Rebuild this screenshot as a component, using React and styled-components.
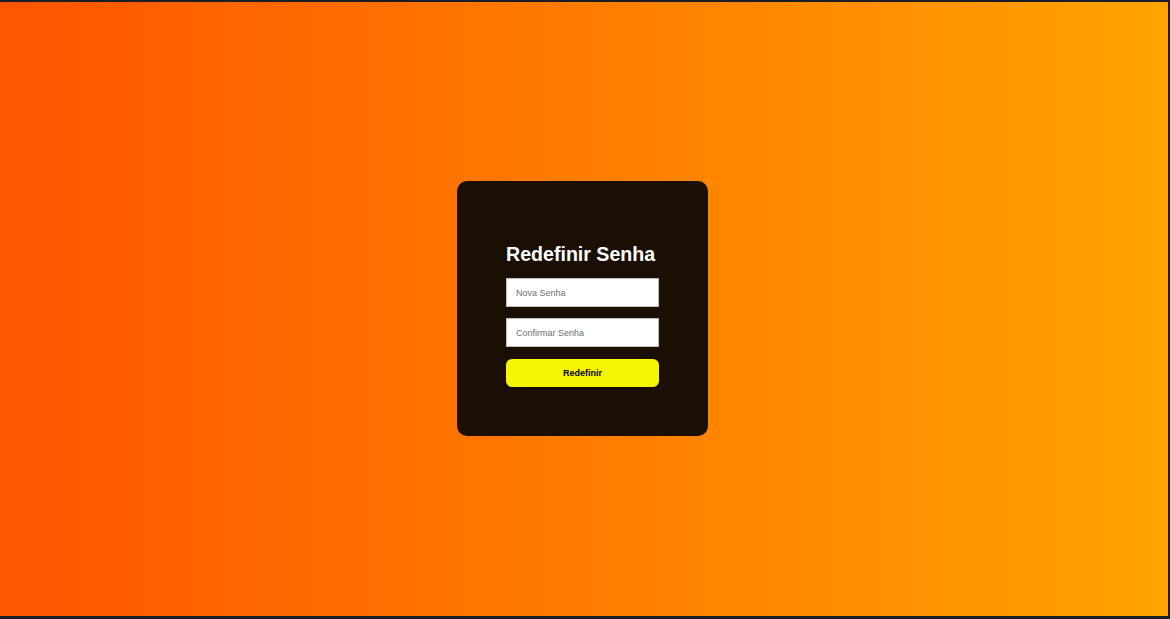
import React from 'react';
import styled, { createGlobalStyle } from 'styled-components';

const GlobalStyle = createGlobalStyle`
  html, body {
    margin: 0;
    padding: 0;
    background: #1b1e26;
    font-family: "Liberation Sans", Arial, sans-serif;
  }
`;

const Page = styled.div`
  margin-top: 2px;
  width: 1168px;
  height: 614px;
  display: flex;
  align-items: center;
  justify-content: center;
  background: linear-gradient(to right, #ff5500, #ffa300);
`;

const Card = styled.form`
  box-sizing: border-box;
  width: 251px;
  padding: 50px 49px 49px;
  margin: 0 3px 1px 0;
  background: #1a0f02;
  border-radius: 10px;
  display: flex;
  flex-direction: column;
`;

const Title = styled.h2`
  margin: 12px 0 12px;
  color: #ffffff;
  font-size: 19.6px;
  line-height: 23px;
  font-weight: bold;
  text-align: left;
  white-space: nowrap;
`;

const Input = styled.input`
  box-sizing: border-box;
  width: 100%;
  height: 29px;
  margin-bottom: ${p => p.$gap}px;
  padding: 0 9px;
  border: 1px solid #bdbdbd;
  background: #ffffff;
  font-family: inherit;
  font-size: 9px;
  outline: none;

  &::placeholder {
    color: #6f6f6f;
  }
`;

const Button = styled.button`
  height: 28px;
  border: none;
  border-radius: 6px;
  background: #f7f506;
  color: #000;
  font-family: inherit;
  font-size: 9px;
  font-weight: bold;
  cursor: pointer;
`;

export default function App() {
  return (
    <>
      <GlobalStyle />
      <Page>
        <Card onSubmit={e => e.preventDefault()}>
          <Title>Redefinir Senha</Title>
          <Input type="password" placeholder="Nova Senha" $gap={11} />
          <Input type="password" placeholder="Confirmar Senha" $gap={12} />
          <Button type="submit">Redefinir</Button>
        </Card>
      </Page>
    </>
  );
}
